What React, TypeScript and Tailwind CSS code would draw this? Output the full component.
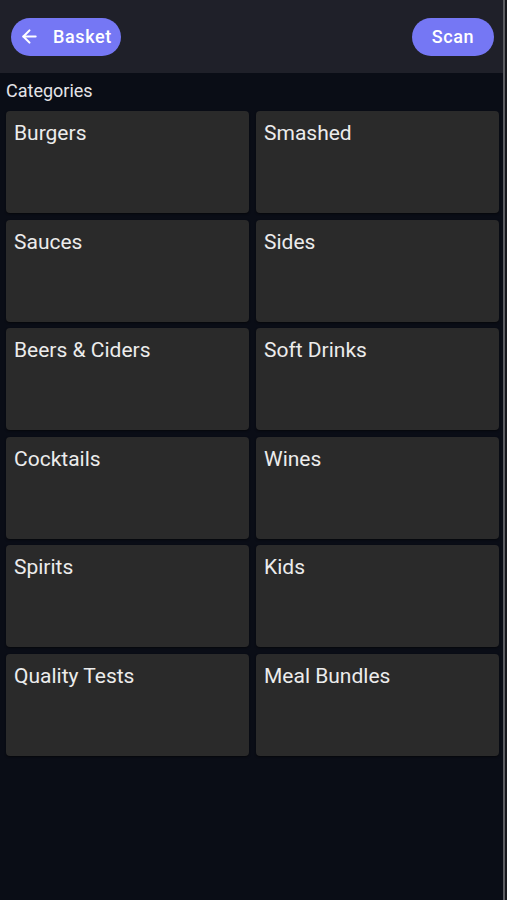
import { ArrowLeft } from "lucide-react";

const categories = [
  "Burgers",
  "Smashed",
  "Sauces",
  "Sides",
  "Beers & Ciders",
  "Soft Drinks",
  "Cocktails",
  "Wines",
  "Spirits",
  "Kids",
  "Quality Tests",
  "Meal Bundles",
];

export default function App() {
  return (
    <div
      className="flex w-[507px] h-[900px] bg-[#0a0d16] overflow-hidden"
      style={{ fontFamily: "Roboto, 'Liberation Sans', sans-serif" }}
    >
      <div className="w-[503px] flex flex-col">
        {/* Header */}
        <header className="h-[73px] bg-[#1f2029] flex items-center justify-between pl-[11px] pr-[9px]">
          <button className="h-[38px] w-[110px] rounded-full bg-[#7577f4] flex items-center pl-[8px] gap-[13px] text-white">
            <ArrowLeft size={21} strokeWidth={2.4} />
            <span className="text-[18px] font-medium tracking-[0.6px]">Basket</span>
          </button>
          <button className="h-[38px] w-[82px] rounded-full bg-[#7577f4] flex items-center justify-center text-white">
            <span className="text-[18px] font-medium tracking-[0.6px]">Scan</span>
          </button>
        </header>

        {/* Categories */}
        <div className="pt-[6px] pl-[6px] pr-[4px]">
          <div className="text-[18px] leading-6 text-[#e4e4e8] mb-[8px]">Categories</div>
          <div className="grid grid-cols-2 gap-x-[7px] gap-y-[6.5px]">
            {categories.map((name) => (
              <div
                key={name}
                className="h-[102px] rounded-[4px] bg-[#2a2a2a] px-[8px] pt-[10px] shadow-[0_1px_2px_rgba(0,0,0,0.5)]"
              >
                <span className="text-[21px] leading-6 text-[#ececec]">{name}</span>
              </div>
            ))}
          </div>
        </div>
      </div>
      <div className="w-[2px] bg-[#5c5d62]" />
      <div className="flex-1 bg-[#16171c]" />
    </div>
  );
}
